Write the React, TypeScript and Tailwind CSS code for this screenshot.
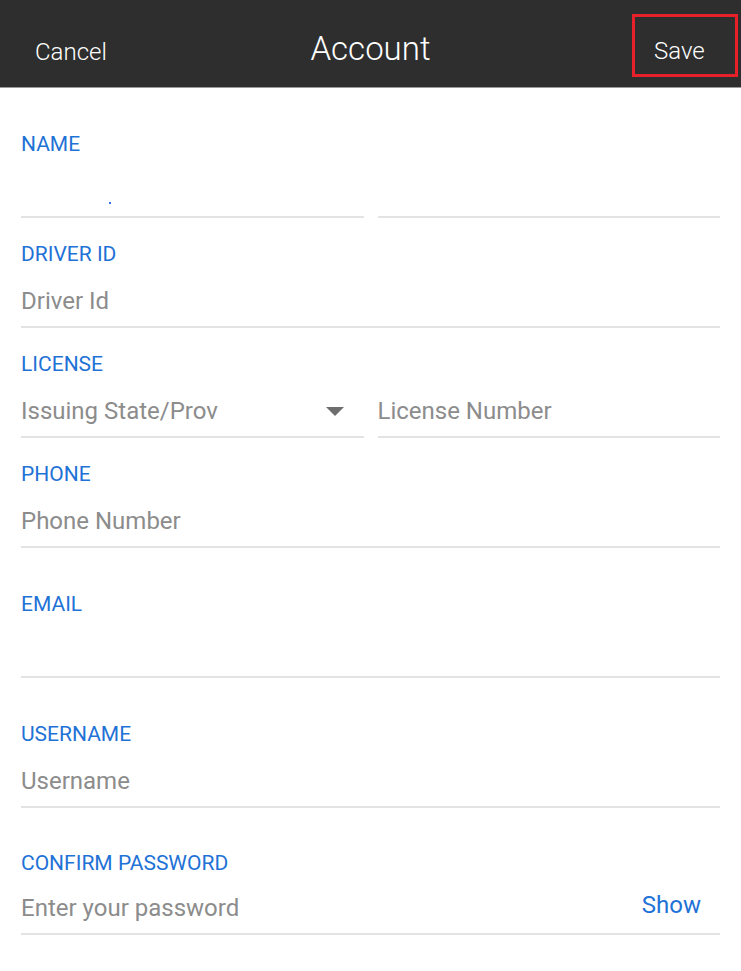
import React from "react";

const font = { fontFamily: "Roboto, 'Noto Sans', sans-serif" };

function Label({ children }: { children: React.ReactNode }) {
  return (
    <div className="h-6 flex items-center text-[21px] leading-6 text-[#1f72d6]">{children}</div>
  );
}

function Field({
  children,
  className = "",
}: {
  children?: React.ReactNode;
  className?: string;
}) {
  return (
    <div className={"flex-1 h-[52px] border-b-2 border-[#e3e3e3] flex items-center " + className}>
      {children}
    </div>
  );
}

function Placeholder({ children }: { children: React.ReactNode }) {
  return <span className="text-[24px] text-[#8c8c8c]">{children}</span>;
}

export default function App() {
  return (
    <div className="w-[741px] h-[971px] bg-white overflow-hidden" style={font}>
      <header className="h-[88px] bg-[#2e2e2e] border-b border-[#9a9a9a] relative flex items-center justify-between">
        <span className="pl-[35px] text-[24px] font-light text-white translate-y-[8px]">Cancel</span>
        <span className="absolute left-0 right-0 text-center text-[33px] font-light text-white pointer-events-none translate-y-[5px]">
          Account
        </span>
        <div className="mr-[3px] w-[106px] h-[63px] border-[3px] border-[#e8202a] flex items-center pl-[19px] mt-[3px]">
          <span className="text-[24px] font-light text-white translate-y-[6px]">Save</span>
        </div>
      </header>

      <div className="px-[21px] pt-[44px]">
        <Label>NAME</Label>
        <div className="mt-[10px] flex gap-[14px]">
          <Field className="relative">
            <span className="absolute left-[88px] top-[36px] w-[2px] h-[2px] bg-[#3a6fe0]" />
          </Field>
          <Field />
        </div>

        <div className="mt-[24px]">
          <Label>DRIVER ID</Label>
          <div className="mt-[10px] flex">
            <Field>
              <Placeholder>Driver Id</Placeholder>
            </Field>
          </div>
        </div>

        <div className="mt-[24px]">
          <Label>LICENSE</Label>
          <div className="mt-[10px] flex gap-[14px]">
            <Field className="justify-between">
              <Placeholder>Issuing State/Prov</Placeholder>
              <svg width="18" height="9" viewBox="0 0 18 9" className="mr-[20px]">
                <polygon points="0,0 18,0 9,9" fill="#6e6e6e" />
              </svg>
            </Field>
            <Field>
              <Placeholder>License Number</Placeholder>
            </Field>
          </div>
        </div>

        <div className="mt-[24px]">
          <Label>PHONE</Label>
          <div className="mt-[10px] flex">
            <Field>
              <Placeholder>Phone Number</Placeholder>
            </Field>
          </div>
        </div>

        <div className="mt-[44px]">
          <Label>EMAIL</Label>
          <div className="mt-[10px] flex">
            <Field />
          </div>
        </div>

        <div className="mt-[44px]">
          <Label>USERNAME</Label>
          <div className="mt-[10px] flex">
            <Field>
              <Placeholder>Username</Placeholder>
            </Field>
          </div>
        </div>

        <div className="mt-[43px]">
          <Label>CONFIRM PASSWORD</Label>
          <div className="mt-[8px] flex">
            <Field className="justify-between">
              <Placeholder>Enter your password</Placeholder>
              <span className="text-[24px] text-[#1f72d6] mr-[19px] mb-[6px]">Show</span>
            </Field>
          </div>
        </div>
      </div>
    </div>
  );
}
